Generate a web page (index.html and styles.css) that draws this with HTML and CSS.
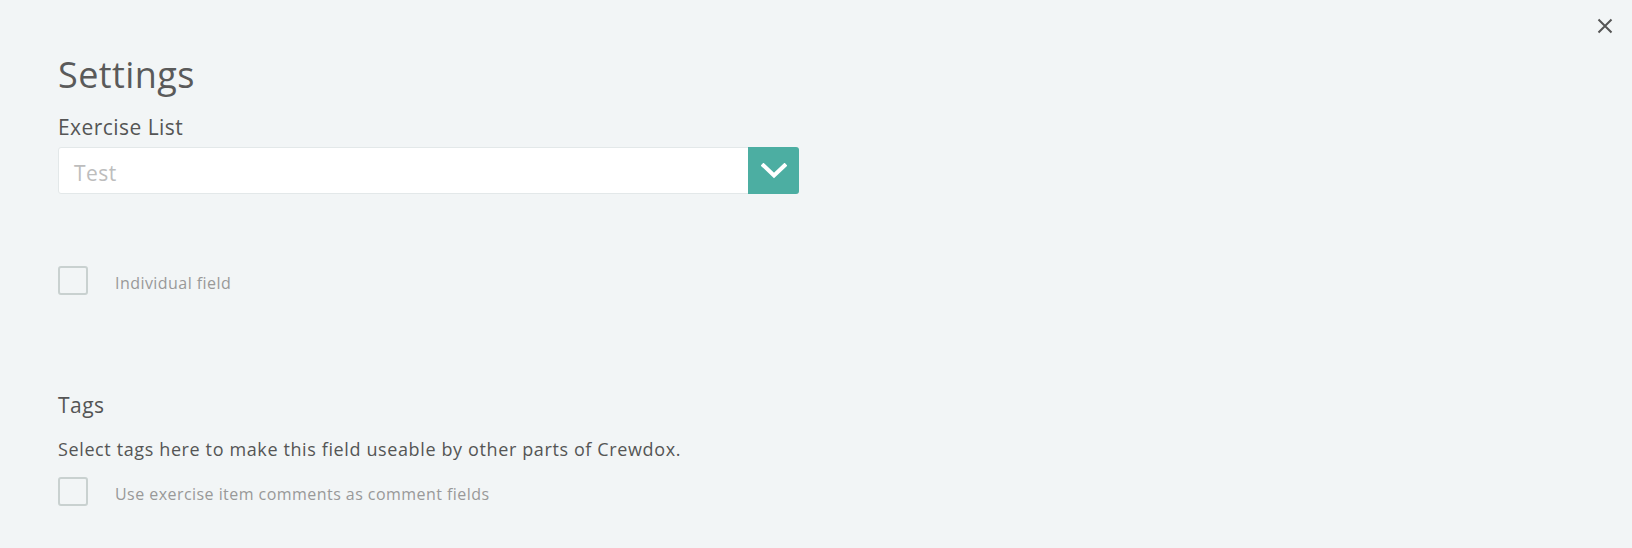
FILE: index.html
```html
<!DOCTYPE html>
<html>
<head>
<meta charset="utf-8">
<link rel="stylesheet" href="styles.css">
</head>
<body>
<div class="modal">
  <button class="close" aria-label="Close">
    <svg width="16" height="16" viewBox="0 0 16 16"><path d="M1.5 1.5 L14.5 14.5 M14.5 1.5 L1.5 14.5" stroke="#555" stroke-width="2" fill="none"/></svg>
  </button>
  <h1 class="title">Settings</h1>
  <label class="field-label">Exercise List</label>
  <div class="select">
    <div class="select-value">Test</div>
    <div class="select-btn">
      <svg width="26" height="16" viewBox="0 0 26 16"><path d="M2.5 2.5 L13 12.5 L23.5 2.5" stroke="#fff" stroke-width="4" fill="none" stroke-linecap="square"/></svg>
    </div>
  </div>
  <div class="check-row first">
    <span class="checkbox"></span>
    <span class="check-label">Individual field</span>
  </div>
  <h2 class="section">Tags</h2>
  <p class="desc">Select tags here to make this field useable by other parts of Crewdox.</p>
  <div class="check-row second">
    <span class="checkbox"></span>
    <span class="check-label">Use exercise item comments as comment fields</span>
  </div>
</div>
</body>
</html>
```
FILE: styles.css
```css
html, body {
  margin: 0;
  padding: 0;
  background: #f2f5f6;
}
body {
  font-family: "Open Sans", "Noto Sans", sans-serif;
  color: #555;
  width: 1632px;
  height: 548px;
  overflow: hidden;
}
.modal {
  position: relative;
  padding: 52px 0 0 58px;
  display: flex;
  flex-direction: column;
  align-items: flex-start;
}
.close {
  position: absolute;
  top: 18px;
  right: 19px;
  border: 0;
  background: none;
  padding: 0;
  width: 16px;
  height: 16px;
}
.title {
  margin: 0;
  font-size: 36px;
  line-height: 46px;
  font-weight: 400;
  letter-spacing: 0.4px;
  color: #5a5a5a;
}
.field-label {
  margin-top: 17px;
  font-size: 21px;
  line-height: 24px;
  letter-spacing: 0.45px;
  color: #555;
}
.select {
  margin-top: 8px;
  width: 741px;
  height: 47px;
  display: flex;
  box-sizing: border-box;
  border: 1px solid #e3e8e9;
  border-radius: 3px;
  background: #fff;
}
.select-value {
  flex: 1;
  padding: 6px 0 0 15px;
  font-size: 21px;
  line-height: 39px;
  letter-spacing: 0.45px;
  color: #bdbdbd;
}
.select-btn {
  width: 51px;
  margin: -1px -1px -1px 0;
  background: #4caea2;
  border-radius: 0 3px 3px 0;
  display: flex;
  align-items: center;
  justify-content: center;
}
.check-row {
  display: flex;
  align-items: flex-start;
}
.check-row.first { margin-top: 72px; }
.check-row.second { margin-top: 17px; }
.checkbox {
  width: 30px;
  height: 29px;
  box-sizing: border-box;
  border: 2px solid #c9d1d0;
  border-radius: 3px;
  background: transparent;
}
.check-label {
  margin-left: 27px;
  margin-top: 7px;
  font-size: 16px;
  line-height: 20px;
  letter-spacing: 0.45px;
  color: #999;
}
.section {
  margin: 98px 0 0;
  font-size: 21px;
  line-height: 24px;
  font-weight: 400;
  letter-spacing: 0.45px;
  color: #555;
}
.desc {
  margin: 21px 0 0;
  font-size: 18px;
  line-height: 22px;
  letter-spacing: 0.62px;
  color: #555;
}
```
